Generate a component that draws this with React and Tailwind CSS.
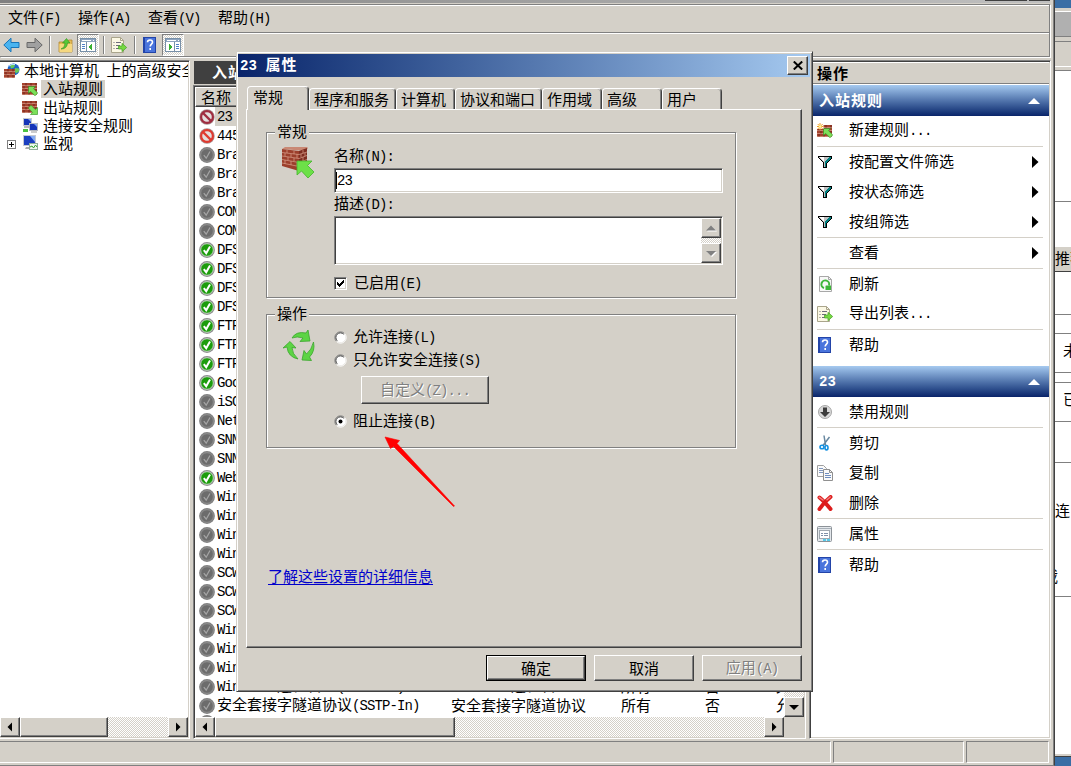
import clsx from 'clsx';

const RAISED =
  'bg-[#d4d0c8] border border-t-white border-l-white border-r-[#404040] border-b-[#404040] shadow-[inset_-1px_-1px_0_#808080]';
const SUNKEN =
  'border border-t-[#808080] border-l-[#808080] border-r-white border-b-white shadow-[inset_1px_1px_0_#404040,inset_-1px_-1px_0_#d4d0c8] p-px';
const TRACK = 'bg-[repeating-conic-gradient(#ffffff_0_25%,#d4d0c8_0_50%)] bg-[length:2px_2px]';

const RULES = [
  ['blocked-dim', '23'],
  ['blocked', '445'],
  ['off', 'Bra'],
  ['off', 'Bra'],
  ['off', 'Bra'],
  ['off', 'COM'],
  ['off', 'COM'],
  ['on', 'DFS'],
  ['on', 'DFS'],
  ['on', 'DFS'],
  ['on', 'DFS'],
  ['on', 'FTP'],
  ['on', 'FTP'],
  ['on', 'FTP'],
  ['on', 'Goo'],
  ['off', 'iSC'],
  ['off', 'Net'],
  ['off', 'SNM'],
  ['off', 'SNM'],
  ['on', 'Web'],
  ['off', 'Win'],
  ['off', 'Win'],
  ['off', 'Win'],
  ['off', 'Win'],
  ['off', 'SCW'],
  ['off', 'SCW'],
  ['off', 'SCW'],
  ['off', 'Win'],
  ['off', 'Win'],
  ['off', 'Win'],
  ['off', 'Windows 远程管理(HTTP-In)', 'Windows 远程管理'],
  ['off', '安全套接字隧道协议(SSTP-In)', '安全套接字隧道协议'],
];

const TABS = [
  ['程序和服务', 'w-[87px]'],
  ['计算机', 'w-[59px]'],
  ['协议和端口', 'w-[87px]'],
  ['作用域', 'w-[60px]'],
  ['高级', 'w-[60px]'],
  ['用户', 'w-[60px]'],
];

// Latin runs take half the width of a Chinese character
function Text({ children, bold, className }) {
  return (
    <span className={clsx('whitespace-pre pb-0.5', bold && 'font-bold tracking-[1px]', className)}>
      {children.split(/([\x20-\x7e]+)/).map((part, i) =>
        i % 2 ? (
          <span
            key={i}
            className={clsx(
              'font-["Liberation_Mono",monospace] text-[14px]',
              bold ? 'tracking-[0.1px]' : 'tracking-[-0.9px]'
            )}
          >
            {part}
          </span>
        ) : (
          part
        )
      )}
    </span>
  );
}

function Bricks({ x = 0, y = 0, w = 14, h = 12 }) {
  const rows = [];
  for (let r = 0; r * 3 < h; r++) {
    rows.push(<path key={r} d={`M${x} ${y + r * 3 + 2.5}h${w}`} stroke="#d9a08c" strokeWidth="0.7" />);
    for (let c = r % 2 ? 2 : 4; c < w; c += 5) {
      rows.push(
        <path key={`${r}-${c}`} d={`M${x + c} ${y + r * 3}v2.5`} stroke="#641c14" strokeWidth="0.8" />
      );
    }
  }
  return (
    <g>
      <rect x={x} y={y} width={w} height={h} fill="#a5432f" />
      {rows}
    </g>
  );
}

function RuleIcon({ out, fresh }) {
  return (
    <svg width="16" height="16" viewBox="0 0 16 16">
      <Bricks y={2} w={15} />
      {out ? (
        <path d="M15.500 15.500h-7l2-2.100L6.300 9 9 6.200l4.300 4.400 2.200-2.100z" fill="#7ce05a" stroke="#2f8f20" strokeWidth="0.6" />
      ) : (
        <path d="M6.500 5.500h7L11.500 7.600 15.700 12 13 14.800 8.700 10.400 6.500 12.500z" fill="#7ce05a" stroke="#2f8f20" strokeWidth="0.6" />
      )}
      {fresh && (
        <g stroke="#f0a020" strokeWidth="1">
          <rect width="6.500" height="6" fill="#fff" stroke="none" />
          <path d="M3 0v7M0 3.500h6.500M.7 1l5 5M5.700 1l-5 5" />
          <circle cx="3.200" cy="3.500" r="1.300" fill="#fff6a0" stroke="none" />
        </g>
      )}
    </svg>
  );
}

function FirewallRootIcon() {
  return (
    <svg width="16" height="16" viewBox="0 0 16 16" className="shrink-0">
      <circle cx="9.500" cy="6.500" r="6" fill="#1b64c8" />
      <path d="M6 2.500q3-2 5 0l-1 2-3 1zM11 5l4 .5v3l-3 2-1.500-3z" fill="#67c95a" />
      <path d="M5 3q3-2.500 6-1.500" stroke="#bfe6ff" fill="none" />
      <Bricks y={6} w={11} h={9} />
    </svg>
  );
}

function MonitorsIcon() {
  return (
    <svg width="16" height="16" viewBox="0 0 16 16">
      <path d="M2 9h6v2H2z" fill="#b8b8b8" />
      <rect x="1.500" y="1.500" width="8" height="7" fill="#1535b8" stroke="#c4c8d0" />
      <path d="M6 2h3v3z" fill="#7fa8f8" />
      <rect x="7.500" y="6.500" width="8" height="7" fill="#1535b8" stroke="#b4b8c0" />
      <path d="M12 7h3v3z" fill="#7fa8f8" />
      <path d="M9 15h6" stroke="#999" />
      <path d="M1 12h5v3H1z" fill="#4cc040" />
    </svg>
  );
}

function MonitorIcon() {
  return (
    <svg width="16" height="16" viewBox="0 0 16 16">
      <rect x="1.500" y=".5" width="12" height="10" fill="#1b3fc0" stroke="#c4c8d0" />
      <path d="M8 1h5v6z" fill="#86acf4" />
      <path d="M4 12h5v2H3z" fill="#aaa" />
      <rect x="7.500" y="8.500" width="8" height="6" fill="#eef8ee" stroke="#8fae9a" />
      <path d="M8 12l2-1 1.500 2 2-3L15 12" stroke="#35a535" fill="none" />
    </svg>
  );
}

function StatusIcon({ type }) {
  if (type === 'blocked' || type === 'blocked-dim') {
    const color = type === 'blocked' ? '#e03a30' : '#a02c40';
    return (
      <svg width="16" height="16" viewBox="0 0 16 16" className="shrink-0">
        <circle cx="8" cy="8" r="7.700" fill="#a89494" />
        <circle cx="8" cy="8" r="5.900" fill="#e4dede" stroke={color} strokeWidth="2.200" />
        <path d="M4 4l8 8" stroke={color} strokeWidth="2.400" />
      </svg>
    );
  }
  const on = type === 'on';
  return (
    <svg width="16" height="16" viewBox="0 0 16 16" className="shrink-0">
      <circle cx="8" cy="8" r="7.900" fill={on ? '#8e8e8e' : '#808080'} />
      <circle cx="8" cy="8" r="6.300" fill={on ? '#1c9c0c' : '#6c6c6c'} stroke={on ? '#d8e8d8' : '#949494'} strokeWidth="0.800" />
      <path d="M4.800 8.200l2.400 3L11 4.500" stroke={on ? '#fff' : '#a4a4a4'} strokeWidth={on ? 2 : 1.300} fill="none" />
    </svg>
  );
}

function HelpIcon() {
  return (
    <svg width="16" height="16" viewBox="0 0 16 16">
      <rect x="1" width="13" height="16" fill="#2344a8" />
      <rect x="3" y="1" width="10" height="14" fill="#4a74dc" />
      <path d="M5.500 5.300q0-2.300 2.500-2.300t2.500 2.200c0 1.800-2.300 2-2.300 4.300M8.200 11v2" stroke="#fff" strokeWidth="1.600" fill="none" />
    </svg>
  );
}

function ExportIcon() {
  return (
    <svg width="16" height="16" viewBox="0 0 16 16">
      <path d="M.5.500h9l3 3v12H.500z" fill="#fbf8e4" stroke="#aaa58c" />
      <path d="M9.500.500v3h3" fill="none" stroke="#aaa58c" />
      <path d="M2.500 5.500h1M5 5.500h5M2.500 8.500h1M5 8.500h4M2.500 11.500h1M5 11.500h5" stroke="#6c6c7c" />
      <path d="M7.500 9h3.500V6.300L15.700 10.500 11 14.700V12H7.500z" fill="#76d842" stroke="#46a028" strokeWidth="0.700" />
    </svg>
  );
}

function FilterIcon() {
  return (
    <svg width="16" height="16" viewBox="0 0 16 16" shapeRendering="crispEdges">
      <path d="M1 2h14v2l-5 5v5H6V9L1 4z" fill="#000" />
      <path d="M2 3h12v1L9 9v4H7V9L2 4z" fill="#c0c0c0" />
      <path d="M3 3h4v3L6 7 3 4z" fill="#fff" />
      <path d="M12 3h2v1L9 9v4H8V8z" fill="#008080" />
    </svg>
  );
}

function RefreshIcon() {
  return (
    <svg width="16" height="16" viewBox="0 0 16 16">
      <path d="M2.500.500h9l3 3v12h-12z" fill="#f8f8f8" stroke="#a8a8a8" />
      <path d="M11.500.500v3h3" fill="none" stroke="#a8a8a8" />
      <path d="M7 12A3.900 3.900 0 1 1 12 9.500" fill="none" stroke="#3fb63a" strokeWidth="2" />
      <path d="M9 9.500h5V14H9z" fill="#3fb63a" />
      <path d="M8.500 9.500v4.500h5z" fill="#3fb63a" />
    </svg>
  );
}

function DisableIcon() {
  return (
    <svg width="16" height="16" viewBox="0 0 16 16">
      <circle cx="8" cy="8" r="6.500" fill="#d8d8d8" stroke="#a8a8a8" />
      <path d="M6 3.500h4V8h3L8 13 3 8h3z" fill="#3c3c3c" />
    </svg>
  );
}

function CutIcon() {
  return (
    <svg width="16" height="16" viewBox="0 0 16 16">
      <path d="M7 .5L8.500 10M12.500 2L6 10.500" stroke="#6888a0" strokeWidth="1.500" />
      <ellipse cx="5" cy="12" rx="2" ry="1.800" fill="none" stroke="#1490e0" strokeWidth="1.600" />
      <ellipse cx="9.500" cy="12.700" rx="1.500" ry="2.200" fill="none" stroke="#1490e0" strokeWidth="1.600" />
    </svg>
  );
}

function CopyIcon() {
  return (
    <svg width="16" height="16" viewBox="0 0 16 16">
      <path d="M.5.500h6l3 3v8h-9z" fill="#fafafa" stroke="#a0a0a0" />
      <path d="M2 3.500h4M2 5.500h5M2 7.500h5" stroke="#7f97c0" />
      <path d="M6.500 4.500h6l3 3v8h-9z" fill="#fafafa" stroke="#909090" />
      <path d="M12.500 4.500v3h3" fill="none" stroke="#909090" />
      <path d="M8 8.500h4M8 10.500h6M8 12.500h6" stroke="#6f8ec0" />
    </svg>
  );
}

function DeleteIcon() {
  return (
    <svg width="16" height="16" viewBox="0 0 16 16">
      <path d="M2.500 2.500Q7 6 13.500 14M13.500 2Q7 7 2.500 14" stroke="#dd1c1c" strokeWidth="4" strokeLinecap="round" fill="none" />
      <path d="M2.300 2.300L6 5M13.300 2L10 4.800" stroke="#f08080" strokeWidth="1.500" strokeLinecap="round" />
    </svg>
  );
}

function PropertiesIcon() {
  return (
    <svg width="16" height="16" viewBox="0 0 16 16">
      <rect x=".5" y=".5" width="14" height="15" rx="1" fill="#e4e8ec" stroke="#8c9298" />
      <path d="M1 2.500h13" stroke="#a8b0b8" />
      <rect x="2.500" y="4.500" width="10" height="8" fill="#fff" stroke="#a0a8b0" />
      <path d="M4 7.500h2M7 7.500h4M4 9.500h2M7 9.500h4" stroke="#8090a8" />
      <path d="M6 14h3M10 14h3" stroke="#28c0e8" strokeWidth="1.500" />
    </svg>
  );
}

function PanelIcon({ right }) {
  return (
    <svg width="16" height="14" viewBox="0 0 16 14" shapeRendering="crispEdges">
      <rect x=".5" y=".5" width="15" height="13" fill="#fff" stroke="#7890a8" />
      <path d="M1 1h14v3H1z" fill="#8ea4c0" />
      <path d="M2 2h9M13 2h1" stroke="#fff" />
      <path d={right ? 'M9.500 4v9' : 'M6.500 4v9'} stroke="#7890a8" />
      <path d={right ? 'M11 6h3M11 8h3M11 10h3' : 'M2 6h3M2 8h3M2 10h3'} stroke="#5080c8" />
      <path d={right ? 'M4 5.500l4 3.500-4 3.500z' : 'M12 5.500L8 9l4 3.500z'} fill="#38b030" />
    </svg>
  );
}

function ArrowIcon({ left }) {
  return (
    <svg width="17" height="16" viewBox="0 0 17 16">
      {left ? (
        <path d="M.8 8L8 1.200V5.500h8v5H8v4.300z" fill="#4ab4f0" stroke="#1874b8" />
      ) : (
        <path d="M16.200 8L9 1.200V5.500H1v5h8v4.300z" fill="#a0a0a0" stroke="#686868" />
      )}
    </svg>
  );
}

function FolderUpIcon() {
  return (
    <svg width="16" height="16" viewBox="0 0 16 16">
      <path d="M1 5h8l1.500-2H14v12H1z" fill="#e8bc58" stroke="#b08830" strokeWidth="0.800" />
      <path d="M1.500 7H14v8H1.500z" fill="#f6d880" />
      <path d="M3 12q4-1 4-6H4.500L8.500 1.500 12 6H9.500Q9 12 3 12z" fill="#58c838" stroke="#30901c" strokeWidth="0.600" />
    </svg>
  );
}

function Triangle({ dir, className }) {
  const d = {
    left: 'M7 .5v9L2.500 5z',
    right: 'M3 .5v9L7.500 5z',
    up: 'M0 7.500h10L5 2.500z',
    down: 'M0 3h10L5 8z',
  }[dir];
  return (
    <svg width="10" height="10" viewBox="0 0 10 10" className={className} fill="currentColor">
      <path d={d} />
    </svg>
  );
}

function ScrollButton({ dir, disabled }) {
  return (
    <div className={clsx(RAISED, 'w-5 h-5 shrink-0 flex items-center justify-center')}>
      <Triangle dir={dir} className={disabled ? 'text-[#808080] drop-shadow-[1px_1px_0_#fff]' : 'text-black'} />
    </div>
  );
}

function HScroll({ thumb }) {
  return (
    <div className={clsx(TRACK, 'flex h-5 flex-1')}>
      <ScrollButton dir="left" />
      <div className={clsx(RAISED, thumb)} />
      <div className="flex-1" />
      <ScrollButton dir="right" />
    </div>
  );
}

function MenuAndToolbar() {
  const sep = 'w-0.5 h-[18px] border-l border-l-[#808080] border-r border-r-white';
  const pressed = clsx(
    TRACK,
    'w-[22px] h-[22px] flex items-center justify-center border border-t-[#808080] border-l-[#808080] border-r-white border-b-white'
  );
  return (
    <div className="w-[1050px] h-[53px] border border-l-0 border-[#808080] shadow-[1px_1px_0_#fff,inset_0_1px_0_#fff]">
      <div className="h-7 flex items-center gap-[17.5px] pl-2 border-b border-[#808080]">
        {['文件(F)', '操作(A)', '查看(V)', '帮助(H)'].map((item) => (
          <Text key={item}>{item}</Text>
        ))}
      </div>
      <div className="h-[23px] flex items-center border-t border-white pl-[3px]">
        <ArrowIcon left />
        <div className="w-1.5" />
        <ArrowIcon />
        <div className="w-1.5" />
        <div className={sep} />
        <div className="w-[7px]" />
        <FolderUpIcon />
        <div className="w-[3px]" />
        <div className={pressed}>
          <PanelIcon />
        </div>
        <div className="w-1" />
        <div className={sep} />
        <div className="w-[6px]" />
        <ExportIcon />
        <div className="w-[7px]" />
        <div className={sep} />
        <div className="w-[6px]" />
        <HelpIcon />
        <div className="w-1" />
        <div className={pressed}>
          <PanelIcon right />
        </div>
      </div>
    </div>
  );
}

function TreePane() {
  return (
    <div className="w-[190px] flex flex-col bg-white border-t border-t-[#808080] border-r border-r-white border-b border-b-white pt-px pr-px pb-px shadow-[inset_0_1px_0_#404040,inset_-1px_-1px_0_#d4d0c8]">
      <div className="flex-1 overflow-hidden">
        <div className="flex items-center h-[18px] pl-1 gap-1">
          <FirewallRootIcon />
          <Text>本地计算机 上的高级安全</Text>
        </div>
        <div className="flex items-center h-[18px] pl-[22px] gap-[3px]">
          <RuleIcon />
          <Text className="bg-[#d4d0c8] px-0.5 h-[18px] leading-4">入站规则</Text>
        </div>
        <div className="flex items-center h-[18px] pl-[22px] gap-[5px]">
          <RuleIcon out />
          <Text>出站规则</Text>
        </div>
        <div className="flex items-center h-[18px] pl-[22px] gap-[5px]">
          <MonitorsIcon />
          <Text>连接安全规则</Text>
        </div>
        <div className="flex items-center h-[18px] pl-[7px]">
          <svg width="9" height="9" viewBox="0 0 9 9" shapeRendering="crispEdges" className="mr-1.5 mt-[3px]">
            <rect x=".5" y=".5" width="8" height="8" fill="#fff" stroke="#808080" />
            <path d="M2 4.500h5M4.500 2v5" stroke="#000" />
          </svg>
          <MonitorIcon />
          <Text className="ml-[5px]">监视</Text>
        </div>
      </div>
      <div className="flex">
        <HScroll thumb="w-[88px]" />
      </div>
    </div>
  );
}

function RulesPane() {
  return (
    <div className="w-[613px] flex flex-col">
      <div className="h-[23px] mt-px ml-px mb-px bg-[#404040] text-white flex items-center pl-[18px]">
        <Text bold>入站规则</Text>
      </div>
      <div className={clsx(SUNKEN, 'flex-1 min-h-0 flex flex-col bg-white')}>
        <div className="flex flex-1 min-h-0">
          <div className="flex-1 min-w-0 overflow-hidden">
            <div className={clsx(RAISED, 'h-5 flex items-center pl-[5px]')}>
              <Text>名称</Text>
            </div>
            {RULES.map(([type, name, group], i) => (
              <div key={i} className="flex items-center h-[19px] pl-1">
                <StatusIcon type={type} />
                <div className={clsx('w-[234px] shrink-0 h-[19px] flex items-center pl-0.5', i === 0 && 'bg-[#d4d0c8]')}>
                  <Text>{name}</Text>
                </div>
                {group && (
                  <>
                    <Text className="w-[170px] shrink-0 ml-[2px]">{group}</Text>
                    <Text className="w-[84px] shrink-0">所有</Text>
                    <Text className="w-[71px] shrink-0">否</Text>
                    <Text>允许</Text>
                  </>
                )}
              </div>
            ))}
            <div className="pl-1">
              <StatusIcon type="off" />
            </div>
          </div>
          <div className={clsx(TRACK, 'w-5 flex flex-col justify-between')}>
            <ScrollButton dir="up" />
            <ScrollButton dir="down" />
          </div>
        </div>
        <div className="flex bg-[#d4d0c8] pr-5">
          <HScroll thumb="w-[240px]" />
        </div>
      </div>
    </div>
  );
}

function ActionHeader({ children }) {
  return (
    <div className="h-[31px] flex items-center justify-between pl-2 pr-[9px] text-white bg-linear-to-b from-[#a6caf0] to-[#0a246a]">
      <Text bold>{children}</Text>
      <Triangle dir="up" className="w-3 h-3" />
    </div>
  );
}

function Action({ icon, label, arrow, last }) {
  return (
    <div className={clsx('ml-1.5 mr-1.5 flex items-center', last ? 'h-[31px] border-b border-[#d4d0c8]' : 'h-[30px]')}>
      <div className="w-8">{icon}</div>
      <Text className="flex-1 pb-[3px]">{label}</Text>
      {arrow && (
        <svg width="7" height="12" viewBox="0 0 7 12" className="mr-1">
          <path d="M0 0v12l6.500-6z" />
        </svg>
      )}
    </div>
  );
}

function ActionsPane() {
  return (
    <div className={clsx(SUNKEN, 'w-[242px] bg-white')}>
      <div className="h-[22px] flex items-center pl-1.5 bg-[#d4d0c8] border-t border-t-white border-b border-b-[#808080] mb-px">
        <Text bold>操作</Text>
      </div>
      <ActionHeader>入站规则</ActionHeader>
      <Action icon={<RuleIcon fresh />} label="新建规则..." last />
      <Action icon={<FilterIcon />} label="按配置文件筛选" arrow />
      <Action icon={<FilterIcon />} label="按状态筛选" arrow />
      <Action icon={<FilterIcon />} label="按组筛选" arrow last />
      <Action label="查看" arrow last />
      <Action icon={<RefreshIcon />} label="刷新" />
      <Action icon={<ExportIcon />} label="导出列表..." last />
      <Action icon={<HelpIcon />} label="帮助" />
      <div className="h-1.5" />
      <ActionHeader>23</ActionHeader>
      <Action icon={<DisableIcon />} label="禁用规则" last />
      <Action icon={<CutIcon />} label="剪切" />
      <Action icon={<CopyIcon />} label="复制" />
      <Action icon={<DeleteIcon />} label="删除" last />
      <Action icon={<PropertiesIcon />} label="属性" last />
      <Action icon={<HelpIcon />} label="帮助" />
    </div>
  );
}

function GroupBox({ title, className, children }) {
  return (
    <div className={clsx('relative border border-[#808080] shadow-[1px_1px_0_#fff,inset_1px_1px_0_#fff]', className)}>
      <span className="absolute left-2 -top-[11px] bg-[#d4d0c8] px-0.5 leading-[17px]">{title}</span>
      {children}
    </div>
  );
}

function Radio({ checked, label, className }) {
  return (
    <label className={clsx('flex items-center gap-1.5', className)}>
      <svg width="13" height="13" viewBox="0 0 13 13">
        <circle cx="6.500" cy="6.500" r="5" fill="#fff" />
        <path d="M2.500 10.500A5.500 5.500 0 0 1 10.500 2.500" fill="none" stroke="#808080" />
        <path d="M3.200 9.700A4.500 4.500 0 0 1 9.700 3.200" fill="none" stroke="#404040" />
        <path d="M10.500 2.500A5.500 5.500 0 0 1 2.500 10.500" fill="none" stroke="#fff" />
        {checked && <circle cx="6.500" cy="6.500" r="2" />}
      </svg>
      <Text>{label}</Text>
    </label>
  );
}

function FirewallRuleIcon() {
  return (
    <svg width="34" height="34" viewBox="0 0 34 34">
      <path d="M1 3L4 1h22l1 1-2 3z" fill="#c98874" />
      <path d="M1 3l17 2v20L1 20z" fill="#9c3f2c" />
      <path d="M18 5l8-3v18l-8 5z" fill="#7c2c20" />
      <path d="M1 6.500l17 2 8-2.500M1 10l17 2.500 8-3M1 13.500l17 3 8-3M1 17l17 3.500 8-4" stroke="#d09480" strokeWidth=".8" fill="none" />
      <path d="M6 4v3M13 5v3M4 7v3M10 8v3M16 8v4M7 11v3M13 12v3M4 14v4M10 15v4M16 16v4M22 4v3M20 8v3M24 7v3M22 11v4" stroke="#dca08c" strokeWidth=".7" />
      <path d="M16 15h15l-4.500 4.500L33 26l-6 6-6.500-7L16 29z" fill="#6de048" stroke="#44b42c" strokeWidth=".8" />
    </svg>
  );
}

function RecycleIcon() {
  return (
    <svg width="34" height="34" viewBox="0 0 34 34" fill="#5cd444" stroke="#3aa62c" strokeWidth=".8">
      <path d="M10 9Q14 2 24 4l2-3 2 11-10 .5 3-3.500Q15 7 10 9z" />
      <path d="M31.500 13q2 9-4 15l2 3.500-9.500-.5 2-9.500 2.500 3.500q5-4 7-12z" />
      <path d="M16 30Q6 28 5 18l-4 1L8 12.500 14 19l-4-.5q0 6 6 11.500z" />
    </svg>
  );
}

function PushButton({ primary, disabled, label, className }) {
  return (
    <button
      className={clsx(
        'flex items-center justify-center',
        disabled ? 'text-[#808080] [text-shadow:1px_1px_0_#fff]' : 'text-black',
        primary && 'border border-black',
        !primary && RAISED,
        className
      )}
    >
      {primary ? (
        <span className={clsx(RAISED, 'w-full h-full flex items-center justify-center')}>
          <Text>{label}</Text>
        </span>
      ) : (
        <Text>{label}</Text>
      )}
    </button>
  );
}

function GeneralTab() {
  return (
    <div className="w-[556px] h-[539px] pl-[19px] pt-[22px] border border-t-white border-l-white border-r-[#404040] border-b-[#404040] shadow-[inset_-1px_-1px_0_#808080]">
      <GroupBox title="常规" className="w-[470px] h-[166px] flex">
        <div className="w-[67px] pl-[14px] pt-[13px]">
          <FirewallRuleIcon />
        </div>
        <div>
          <div className="h-[35px] pt-[11px] flex items-center">
            <Text>名称(N):</Text>
          </div>
          <div className={clsx(SUNKEN, 'w-[389px] h-[25px] bg-white flex items-center')}>
            <span className="w-px h-[17px] bg-black" />
            <Text>23</Text>
          </div>
          <div className="h-[23px] flex items-center">
            <Text>描述(D):</Text>
          </div>
          <div className={clsx(SUNKEN, 'w-[389px] h-[49px] bg-white flex justify-end')}>
            <div className={clsx(TRACK, 'flex flex-col justify-between')}>
              <ScrollButton dir="up" disabled />
              <ScrollButton dir="down" disabled />
            </div>
          </div>
          <label className="flex items-center gap-[7px] mt-[9px]">
            <span className={clsx(SUNKEN, 'w-[13px] h-[13px] bg-white')}>
              <svg width="9" height="9" viewBox="0 0 9 9" shapeRendering="crispEdges">
                <path d="M1 3v3l2 2 5-5V0L3 5z" />
              </svg>
            </span>
            <Text>已启用(E)</Text>
          </label>
        </div>
      </GroupBox>
      <GroupBox title="操作" className="w-[470px] h-[134px] mt-4 flex">
        <div className="w-[67px] pl-[15px] pt-[14px]">
          <RecycleIcon />
        </div>
        <div className="pt-[11px]">
          <Radio label="允许连接(L)" className="h-[23px]" />
          <Radio label="只允许安全连接(S)" className="h-[23px]" />
          <PushButton disabled label="自定义(Z)..." className="w-32 h-7 ml-[27px] mt-1" />
          <Radio checked label="阻止连接(B)" className="h-[23px] mt-1.5" />
        </div>
      </GroupBox>
      <a className="inline-block mt-[120px] ml-0.5 text-[#0000cc] underline underline-offset-2">了解这些设置的详细信息</a>
    </div>
  );
}

function PropertiesDialog() {
  return (
    <div className="absolute left-[236px] top-[51px] w-[577px] h-[641px] bg-[#d4d0c8] border border-t-[#d4d0c8] border-l-[#d4d0c8] border-r-[#404040] border-b-[#404040] shadow-[inset_1px_1px_0_#fff,inset_-1px_-1px_0_#808080]">
      <div className="mt-0.5 ml-px mr-0.5 h-[23px] flex items-center justify-between px-0.5 text-white bg-linear-to-r from-[#0a246a] to-[#a6caf0]">
        <Text bold>23 属性</Text>
        <div className={clsx(RAISED, 'w-[21px] h-[19px] flex items-center justify-center')}>
          <svg width="10" height="9" viewBox="0 0 10 9" stroke="#000" strokeWidth="2">
            <path d="M.8.500l8.400 8M9.200.500L.8 8.500" />
          </svg>
        </div>
      </div>
      <div className="h-8 flex items-end pl-2.5">
        <div className="relative z-10 w-[62px] h-6 -mb-px pl-[5px] flex items-center bg-[#d4d0c8] rounded-t-sm border border-b-0 border-t-white border-l-white border-r-[#404040] shadow-[inset_-1px_0_0_#808080]">
          <Text className="pb-1">常规</Text>
        </div>
        {TABS.map(([label, width]) => (
          <div
            key={label}
            className={clsx(
              width,
              'h-[21px] flex items-center pl-1 rounded-t-sm border border-b-0 border-t-white border-l-white border-r-[#404040] shadow-[inset_-1px_0_0_#808080]'
            )}
          >
            <Text>{label}</Text>
          </div>
        ))}
      </div>
      <div className="pl-[9px]">
        <GeneralTab />
      </div>
      <div className="flex justify-end gap-2 mt-[7px] pr-2.5">
        <PushButton primary label="确定" className="w-[100px] h-[26px]" />
        <PushButton label="取消" className="w-[100px] h-[26px]" />
        <PushButton disabled label="应用(A)" className="w-[100px] h-[26px]" />
      </div>
      <svg className="absolute left-36 top-[381px]" width="80" height="80" viewBox="0 0 80 80">
        <path d="M4 4l5.500 11.500 3-2L72.500 73.500 73.500 73 16 10.500 18.500 7.500z" fill="#f00" stroke="#f00" strokeWidth=".6" />
      </svg>
    </div>
  );
}

function BackgroundWindow() {
  const line = 'border-b border-[#808080] bg-white';
  return (
    <div className="w-4 h-[766px] overflow-hidden bg-[#3a6ea5]">
      <div className="h-2" />
      <div className="h-1 bg-[#d4d0c8] border-b border-white" />
      <div className="h-[25px] bg-[#b0b0b0] border-b border-[#808080]" />
      <div className="h-[5px] bg-[#d4d0c8] border-b border-[#808080]" />
      <div className="h-[25px] bg-[#d4d0c8] border-b border-white" />
      <div className="h-1 bg-[#d4d0c8] border-b border-[#808080]" />
      <div className={clsx(line, 'h-[131px]')} />
      <div className="h-[45px] bg-white" />
      <div className="h-[25px] bg-[#d4d0c8] border-b border-[#404040] flex items-center pb-1 whitespace-nowrap">推荐</div>
      <div className={clsx(line, 'h-[43px]')} />
      <div className={clsx(line, 'h-[19px]')} />
      <div className={clsx(line, 'h-[39px] flex items-center pl-2 pb-2 whitespace-nowrap')}>未</div>
      <div className={clsx(line, 'h-[10px]')} />
      <div className={clsx(line, 'h-[39px] flex items-center pl-2 pb-2 whitespace-nowrap')}>已</div>
      <div className={clsx(line, 'h-[41px]')} />
      <div className={clsx(line, 'h-[134px] pt-[39px]')}>
        <div>连</div>
        <div className="mt-[51px] -ml-3">载</div>
      </div>
      <div className="h-[157px] bg-white" />
      <div className="h-[3px] bg-[#d4d0c8] border-b border-[#404040]" />
    </div>
  );
}

function StatusBar() {
  const cell = 'border border-t-[#808080] border-l-[#808080] border-r-white border-b-white';
  return (
    <div className="flex h-[22px] mt-0.5 gap-0.5">
      <div className={clsx(cell, 'w-[831px] border-l-0')} />
      <div className={clsx(cell, 'w-[131px]')} />
      <div className={clsx(cell, 'w-[83px]')} />
    </div>
  );
}

export default function App() {
  return (
    <div className='relative flex w-[1071px] h-[766px] overflow-hidden text-[15px] leading-none text-black font-["Noto_Sans_CJK_SC",sans-serif] select-none'>
      <div className="w-[1055px] h-[766px] shrink-0 bg-[#d4d0c8] border-r border-r-[#404040] border-b border-b-[#808080] shadow-[inset_-1px_0_0_#808080]">
        <div className="h-[3px] w-[1050px] mb-px bg-linear-to-r from-[#808080] to-[#c0c0c0] flex justify-end gap-0.5">
          <div className="w-[42px] h-px bg-[#404040]" />
          <div className="w-[21px] h-px bg-[#404040]" />
        </div>
        <MenuAndToolbar />
        <div className="flex h-[679px] mt-[3px]">
          <TreePane />
          <div className="w-[3px]" />
          <RulesPane />
          <div className="w-[3px]" />
          <ActionsPane />
        </div>
        <StatusBar />
      </div>
      <BackgroundWindow />
      <PropertiesDialog />
    </div>
  );
}
